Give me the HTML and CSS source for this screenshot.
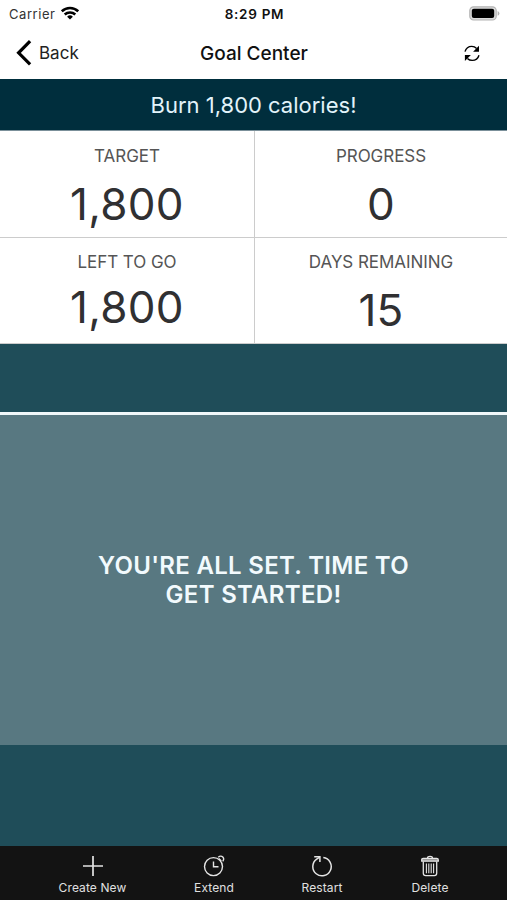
FILE: index.html
```html
<!DOCTYPE html>
<html lang="en">

<head>
    <meta charset="UTF-8">
    <meta name="viewport" content="width=device-width, initial-scale=1.0">
    <title>Goal Center</title>
    <link rel="stylesheet" href="styles.css">
</head>

<body>
    <div class="status-bar">
        <div class="carrier">
            <span>Carrier</span>
            <svg width="18" height="14" viewBox="0 0 18 14" fill="none" stroke="#000" stroke-width="2.5">
                <path d="M.8 5.3a11.8 11.8 0 0 1 16.4 0" />
                <path d="M3.7 8.5a7.7 7.7 0 0 1 10.6 0" />
                <path d="M9 13.6 6.1 10.7a4.1 4.1 0 0 1 5.8 0z" fill="#000" stroke="none" />
            </svg>
        </div>
        <div class="time">8:29 PM</div>
        <svg class="battery" width="31" height="15" viewBox="0 0 31 15">
            <rect x=".8" y=".8" width="26.4" height="13.2" rx="3.8" fill="#ddd" stroke="#b4b4b4" stroke-width="1.2" />
            <rect x="2.8" y="2.8" width="22.4" height="9.2" rx="2" />
            <path d="M28.6 5.1q1.8.7 1.8 2.3t-1.8 2.3z" fill="#b4b4b4" />
        </svg>
    </div>

    <div class="nav-bar">
        <div class="back">
            <svg width="16" height="26" viewBox="0 0 16 26" fill="none" stroke="#000" stroke-width="3.2">
                <path d="M14.1 1.2 2.6 12.8l11.5 11.5" />
            </svg>
            <span>Back</span>
        </div>
        <h1>Goal Center</h1>
        <svg class="refresh" width="16" height="17" viewBox="0 0 16 17" fill="none" stroke="#000" stroke-width="1.4">
            <path d="M1 6.6C2 3.2 4.8 1.4 7.8 1.4c2 0 3.5.7 4.8 2" />
            <path d="M15 10.2c-1 3.4-3.8 5.2-6.8 5.2-2 0-3.5-.7-4.8-2" />
            <path d="M15 .8v5.9H9.1zM.9 16v-6h6z" fill="#000" stroke="none" />
        </svg>
    </div>

    <div class="goal-title">Burn 1,800 calories!</div>

    <div class="stats">
        <div class="stat">
            <div class="label">TARGET</div>
            <div class="value">1,800</div>
        </div>
        <div class="stat">
            <div class="label">PROGRESS</div>
            <div class="value">0</div>
        </div>
        <div class="stat">
            <div class="label">LEFT TO GO</div>
            <div class="value">1,800</div>
        </div>
        <div class="stat">
            <div class="label">DAYS REMAINING</div>
            <div class="value days">15</div>
        </div>
    </div>

    <div class="chart">
        <div class="message">YOU'RE ALL SET. TIME TO<br>GET STARTED!</div>
    </div>

    <div class="toolbar">
        <div class="tool create">
            <svg width="22" height="22" viewBox="0 0 22 22" fill="none" stroke="#e4e4e4" stroke-width="1.7">
                <path d="M11 1v20M1 11h20" />
            </svg>
            <span>Create New</span>
        </div>
        <div class="tool">
            <svg width="22" height="22" viewBox="0 0 22 22" fill="none" stroke="#e4e4e4" stroke-width="1.4">
                <circle cx="10.5" cy="11.6" r="9" />
                <path d="M10.5 6.5v5.3h5" />
                <path d="M15.2 2.3q2.5-2.2 4.6-.3 1.8 2-.1 4.4" />
                <path d="m15.8 3.6 2.5 2.3" />
            </svg>
            <span>Extend</span>
        </div>
        <div class="tool">
            <svg width="22" height="22" viewBox="0 0 22 22" fill="none" stroke="#e4e4e4" stroke-width="1.5">
                <path d="M12.3 2.5a9.2 9.2 0 1 1-6.6 1.6l2.9-2" />
                <path d="M3.2 1.8h5.7v5.3" />
            </svg>
            <span>Restart</span>
        </div>
        <div class="tool">
            <svg width="22" height="22" viewBox="0 0 22 22" fill="none" stroke="#e4e4e4" stroke-width="1.3">
                <path d="M8.5 3.2q0-1.8 2.5-1.8t2.5 1.8" />
                <path d="M2.7 6.2V5q0-1.6 1.6-1.6h13.4q1.6 0 1.6 1.6v1.2z" fill="#999" />
                <path d="M4.3 6.5v11.8q0 2.4 2.4 2.4h8.6q2.4 0 2.4-2.4V6.5" />
                <path d="M7.4 8.5v9.7M9.8 8.5v9.7M12.2 8.5v9.7M14.6 8.5v9.7" stroke-width="1.1" />
            </svg>
            <span>Delete</span>
        </div>
    </div>
</body>

</html>
```
FILE: styles.css
```css
* {
    box-sizing: border-box;
}

body {
    margin: 0;
    height: 900px;
    display: flex;
    flex-direction: column;
    overflow: hidden;
    background-color: #fff;
    font-family: Inter, "Liberation Sans", sans-serif;
    color: #111;
}

svg {
    display: block;
    flex: none;
}

.status-bar {
    height: 27px;
    display: grid;
    grid-template-columns: 1fr auto 1fr;
    align-items: center;
    padding: 0 7px 0 9px;
    font-size: 13px;
}

.carrier {
    display: flex;
    align-items: center;
    gap: 6px;
    color: #333;
    letter-spacing: 0.55px;
}

.carrier svg {
    margin-top: -2px;
}

.time {
    font-size: 13.5px;
    font-weight: 600;
    letter-spacing: 0.7px;
}

.battery {
    justify-self: end;
    margin-top: -1px;
}

.nav-bar {
    height: 52px;
    display: grid;
    grid-template-columns: 1fr auto 1fr;
    align-items: center;
    padding: 0 15px 0 16px;
}

.back {
    display: flex;
    align-items: center;
    gap: 7px;
    font-size: 17px;
    color: #222;
}

.nav-bar h1 {
    margin: 0;
    font-size: 19px;
    font-weight: 500;
}

.refresh {
    justify-self: end;
    margin-right: 12px;
}

/* Goal summary */
.goal-title {
    height: 52px;
    line-height: 52px;
    text-align: center;
    font-size: 22px;
    color: #e2f3fa;
    background-color: #002e3d;
    border-bottom: 1px solid #7b909a;
}

.stats {
    height: 213px;
    display: grid;
    grid-template-columns: 255px 1fr;
    grid-template-rows: 107px 106px;
}

.stat {
    text-align: center;
    border-bottom: 1px solid #ccc;
    padding-top: 14px;
}

.stat:nth-child(odd) {
    border-right: 1px solid #ccc;
}

.stat:nth-child(n+3) {
    padding-top: 13px;
}

.label {
    font-size: 17px;
    line-height: 22px;
    letter-spacing: -0.05px;
    color: #555;
}

.value {
    margin-top: 10px;
    font-size: 44px;
    line-height: 54px;
    letter-spacing: 0.3px;
    color: #303032;
}

.stat:nth-child(n+3) .value {
    margin-top: 7px;
}

.stat:nth-child(n+3) .value.days {
    margin-top: 10px;
}

.chart {
    height: 502px;
    padding: 68px 0 101px;
    background-color: #1f4d59;
    display: flex;
}

.message {
    flex: 1;
    display: flex;
    flex-wrap: wrap;
    align-items: center;
    justify-content: center;
    border-top: 3px solid #f0f7f9;
    background-color: #587881;
    color: #f2fafd;
    font-size: 24px;
    font-weight: 600;
    line-height: 29px;
    letter-spacing: 0.3px;
    text-align: center;
}

/* Bottom toolbar */
.toolbar {
    height: 54px;
    display: flex;
    padding-left: 25px;
    background-color: #131313;
    color: #e0e0e0;
    font-size: 12px;
}

.tool {
    width: 108px;
    padding-top: 9px;
    display: flex;
    flex-direction: column;
    align-items: center;
    gap: 3px;
    line-height: 16px;
    letter-spacing: 0.1px;
}

.create {
    width: 135px;
}
```
